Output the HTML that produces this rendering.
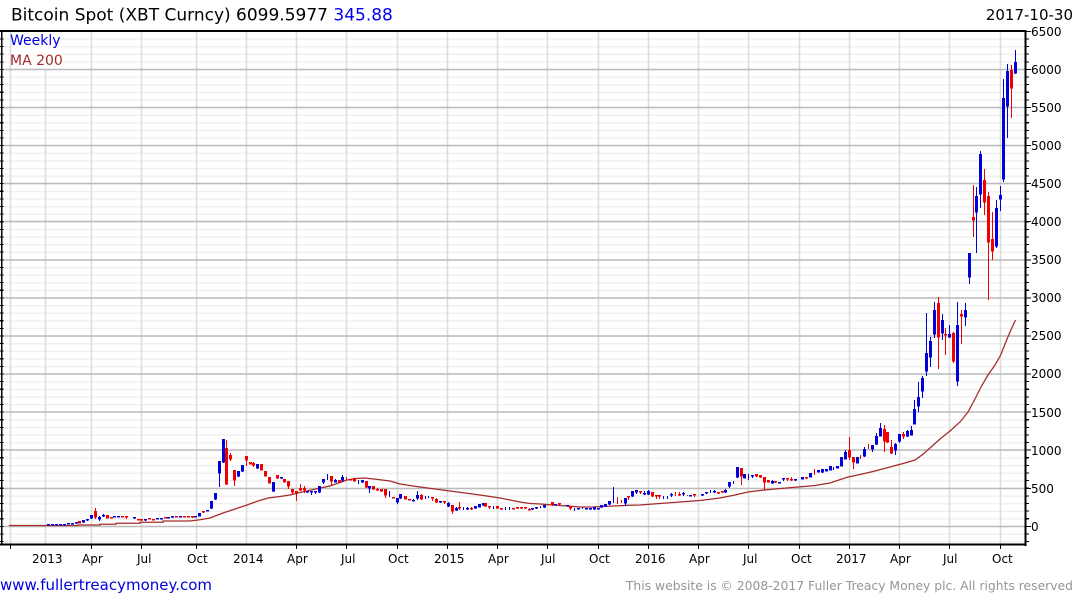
<!DOCTYPE html>
<html><head><meta charset="utf-8"><title>Bitcoin Spot</title>
<style>html,body{margin:0;padding:0;background:#fff}svg{display:block}text{font-family:"DejaVu Sans",sans-serif}a{text-decoration:none}</style></head>
<body>
<svg width="1075" height="600" viewBox="0 0 1075 600" xmlns="http://www.w3.org/2000/svg">
<rect width="1075" height="600" fill="#fff"/>
<!-- grid -->
<g fill="none">
<path d="M513 30.8V545" stroke="#f0f0f0" stroke-width="1024" stroke-dasharray="1.5 6.115"/>
<rect x="10" y="32" width="50" height="36" fill="#fff" stroke="none"/>
<path d="M10.5 31V544M45.5 69V544M91.5 31V544M141.5 31V544M196.5 31V544M246.5 31V544M296.5 31V544M346.5 31V544M397.5 31V544M447.5 31V544M497.5 31V544M547.5 31V544M598.5 31V544M648.5 31V544M698.5 31V544M748.5 31V544M799.5 31V544M849.5 31V544M899.5 31V544M949.5 31V544M1000.5 31V544" stroke="#dcdcdc" stroke-width="1.5"/>
<path d="M2 69.5H1025M2 107.5H1025M2 145.5H1025M2 183.5H1025M2 221.5H1025M2 260H1025M2 298H1025M2 336H1025M2 374H1025M2 412H1025M2 450H1025M2 488.5H1025M2 526.5H1025" stroke="#bbb" stroke-width="1.4"/>
</g>
<!-- 200 MA -->
<path fill="none" stroke="#a52a2a" stroke-width="1.25" d="M9 525.5H78V525H100V524.3H116V523.3H140V522.3H163V521H190L200 519.8 210 518 223 513 235 509 247 505 258 501 268 498 280 496.5 290 495 300 492.5 307 491 320 488 330 486 340 482.5 347 480 356 478.5 365 478 378 479.5 390 481 400 484 410 485.5 420 487 435 489 450 491 465 493 480 495 490 496.5 500 498 510 500 520 502 530 503.5 540 504 560 505.5 580 507 593 507 603 506.5 613 506 630 505.3 640 505 660 503.5 680 502 700 500.5 720 498 735 495 748 492 760 490.5 775 489 798 487 815 485.5 830 483 848 477 860 474.5 875 471 890 467 905 463 915 460 922 455 930 448 940 439 950 431 960 422 968 412 975 399 981 387 988 375 995 365 1000.7 355 1005 344 1010 332 1015.5 320"/>
<!-- candles -->
<defs>
<path id="bb" d="M1015.5 62V73M1007.5 71V106M1003.5 98V179M1000.5 195V199M996.5 208V246M980.5 154V194M976.5 196V212M969.5 253V277M965.5 310V317M957.5 325V381M949.5 334V337M942.5 320V333M934.5 310V334M930.5 341V357M926.5 353V371M922.5 378V391M918.5 397V406M914.5 409V424M911.5 430V435M907.5 431V436M899.5 434V441M895.5 444V450M880.5 428V436M876.5 436V444M872.5 445V449M864.5 449V456M857.5 457V463M845.5 452V459M841.5 457V466M837.5 466V468M830.5 466V470M826.5 469V471M822.5 469V472M818.5 470V472M810.5 473V477M802.5 477V479M795.5 479V480M783.5 478V479M779.5 482V483M772.5 481V483M752.5 475V476M744.5 474V478M737.5 467V477M729.5 482V486M725.5 490V492M714.5 491V492M706.5 492V493M702.5 494V495M690.5 495V496M683.5 493V494M671.5 494V495M648.5 491V494M644.5 493V494M636.5 490V492M632.5 491V496M625.5 498V503M609.5 501V504M605.5 504V506M601.5 505V507M598.5 508V509M594.5 507V509M590.5 508V509M586.5 508V509M578.5 508V509M567.5 505V506M555.5 504V505M544.5 505V507M536.5 507V508M532.5 508V509M483.5 503V505M479.5 504V507M475.5 506V508M467.5 508V509M456.5 508V510M448.5 503V506M440.5 501V502M417.5 495V498M413.5 500V501M400.5 494V498M397.5 498V502M369.5 486V488M362.5 480V482M342.5 477V480M335.5 480V482M323.5 479V482M319.5 486V492M315.5 491V492M311.5 491V492M307.5 491V492M281.5 477V478M273.5 482V491M257.5 464V468M242.5 465V471M238.5 471V476M223.5 439V462M219.5 461V473M215.5 493V499M211.5 501V508M207.5 510V511M199.5 513V516M195.5 516V517M180.5 516V517M172.5 516V517M168.5 517V518M161.5 518V519M157.5 518V519M145.5 519V520M134.5 517V518M118.5 516V517M114.5 516V517M103.5 515V516M99.5 517V519M91.5 515V518M87.5 519V520M83.5 520V522M76.5 522V523M72.5 523V524M68.5 523V524M64.5 524V525M60.5 524V525M56.5 524V525M52.5 524V525M48.5 524V525"/>
<path id="rb" d="M1011.5 70V88M992.5 239V251M988.5 196V242M984.5 180V202M973.5 217V220M961.5 314V316M953.5 333V361M945.5 334V335M938.5 303V337M903.5 434V436M891.5 447V453M887.5 432V442M884.5 429V441M853.5 457V462M849.5 450V457M806.5 477V478M791.5 479V480M787.5 478V479M775.5 481V482M764.5 477V482M768.5 480V482M760.5 475V477M756.5 474V476M741.5 468V476M722.5 491V492M718.5 492V493M694.5 494V495M679.5 494V495M659.5 495V496M656.5 495V496M652.5 492V496M640.5 491V492M628.5 496V497M570.5 506V508M559.5 503V504M552.5 502V505M529.5 509V510M525.5 507V508M521.5 507V508M517.5 507V508M513.5 508V509M501.5 508V509M497.5 506V508M489.5 506V507M485.5 503V506M471.5 508V509M459.5 507V508M452.5 505V511M444.5 501V502M436.5 499V502M432.5 497V498M421.5 495V499M409.5 499V500M405.5 496V499M393.5 497V498M385.5 489V495M381.5 489V491M377.5 489V490M373.5 486V489M366.5 481V487M354.5 478V481M350.5 479V480M339.5 480V482M331.5 476V481M304.5 488V490M300.5 488V490M296.5 491V493M292.5 489V492M288.5 481V486M284.5 479V482M277.5 475V478M269.5 477V483M265.5 471V476M261.5 464V470M253.5 463V465M250.5 462V464M246.5 456V460M234.5 470V480M230.5 455V459M226.5 448V484M203.5 511V512M192.5 516V517M188.5 516V517M184.5 516V517M176.5 516V517M165.5 517V518M153.5 519V520M149.5 518V519M141.5 519V520M138.5 519V520M126.5 516V517M122.5 516V517M111.5 517V518M107.5 515V518M95.5 511V517M79.5 521V523"/>
</defs>
<g fill="none" shape-rendering="crispEdges">
<path stroke="#0000d8" stroke-width="1" d="M1015.5 50V74M1007.5 64V138M1003.5 79V182M1000.5 186V211M996.5 200V248M980.5 151V208M976.5 187V253M969.5 253V284M965.5 303V326M957.5 302V386M949.5 325V338M942.5 314V340M934.5 302V338M930.5 337V367M926.5 313V376M922.5 376V398M918.5 382V412M914.5 400V424M911.5 426V435M907.5 430V437M899.5 434V443M895.5 443V455M880.5 423V436M876.5 433V445M872.5 445V452M864.5 447V457M857.5 457V463M845.5 450V459M841.5 457V466M833.5 467V470M830.5 466V470M826.5 469V471M822.5 469V473M818.5 470V472M810.5 473V477M802.5 477V479M795.5 479V481M772.5 480V484M725.5 489V493M729.5 482V488M733.5 481V484M737.5 467V478M744.5 474V478M748.5 474V480M752.5 475V478M779.5 482V483M783.5 478V481M763.5 478V479M632.5 491V497M636.5 490V494M644.5 491V495M648.5 490V495M663.5 496V499M667.5 496V499M671.5 493V497M683.5 492V496M702.5 494V496M706.5 492V494M710.5 490V493M714.5 490V493M625.5 498V506M613.5 487V503M609.5 501V505M605.5 504V507M601.5 505V508M594.5 507V510M590.5 508V510M582.5 507V509M574.5 508V511M544.5 505V508M540.5 506V508M536.5 507V509M532.5 508V510M505.5 507V510M509.5 507V510M493.5 506V509M483.5 503V506M479.5 504V507M475.5 506V509M467.5 507V510M463.5 507V510M456.5 507V511M448.5 502V507M440.5 501V503M428.5 496V498M425.5 496V499M417.5 491V500M413.5 499V501M400.5 494V499M397.5 498V504M389.5 491V497M369.5 486V493M362.5 480V483M358.5 480V484M342.5 475V482M335.5 479V482M327.5 474V480M323.5 479V484M319.5 486V493M315.5 491V494M311.5 491V495M307.5 491V493M281.5 477V479M273.5 482V492M257.5 464V469M242.5 465V472M238.5 471V477M223.5 439V463M219.5 461V487M215.5 493V500M211.5 501V509M207.5 510V511M199.5 513V516M103.5 514V517M99.5 516V521M91.5 515V519M83.5 520V523M87.5 519V521M76.5 522V524M172.5 516V518M134.5 517V519M145.5 519V521"/>
<use href="#bb" stroke="#0000d8" stroke-width="3"/>
<use href="#bb" y="0.7" stroke="#0000d8" stroke-width="3"/>
<path stroke="#f00000" stroke-width="1" d="M1011.5 65V118M992.5 212V260M988.5 192V300M984.5 169V215M973.5 185V237M961.5 310V344M953.5 332V363M945.5 328V355M938.5 297V369M903.5 432V439M891.5 440V454M887.5 432V443M884.5 425V452M868.5 444V449M860.5 455V459M853.5 457V469M849.5 437V460M814.5 469V475M806.5 477V479M791.5 477V481M787.5 478V481M775.5 481V483M764.5 477V490M760.5 475V478M756.5 474V477M741.5 468V485M722.5 491V493M718.5 492V494M694.5 494V497M687.5 495V496M679.5 492V496M675.5 492V496M659.5 495V499M656.5 495V499M652.5 492V497M640.5 491V494M628.5 496V500M621.5 500V503M617.5 497V504M570.5 506V510M559.5 503V505M552.5 502V506M529.5 508V510M525.5 507V509M521.5 507V509M517.5 507V509M501.5 508V510M497.5 506V509M489.5 506V509M485.5 503V507M471.5 507V510M459.5 502V510M452.5 505V514M444.5 501V504M436.5 498V503M432.5 497V501M421.5 494V500M409.5 499V500M405.5 496V499M393.5 497V498M385.5 489V498M381.5 489V492M377.5 488V491M373.5 486V490M366.5 481V488M354.5 478V481M350.5 479V480M346.5 477V480M339.5 480V482M331.5 476V485M304.5 486V493M300.5 484V491M296.5 491V501M292.5 489V495M288.5 481V489M284.5 479V482M277.5 475V479M269.5 477V483M265.5 471V476M261.5 464V470M253.5 462V467M250.5 462V464M246.5 456V466M234.5 470V486M230.5 453V461M226.5 440V485M203.5 511V513M192.5 516V518M188.5 516V517M141.5 519V521M126.5 516V519M95.5 508V519"/>
<use href="#rb" stroke="#f00000" stroke-width="3"/>
<use href="#rb" y="0.7" stroke="#f00000" stroke-width="3"/>
</g>
<!-- frame -->
<g fill="none" stroke="#000" shape-rendering="crispEdges">
<path stroke-width="2" d="M0 31H1026M1025.5 30V546M0 544.5H1026"/>
<path stroke-width="1.5" d="M1.5 30V545"/>
<path d="M1.5 30.8V545" stroke-width="4" stroke-dasharray="1.1 6.515"/>
<path d="M1027.5 30.8V545" stroke-width="3" stroke-dasharray="1.1 6.515"/>
<path stroke-width="1.2" d="M1026 31.5H1031M1026 69.5H1031M1026 107.5H1031M1026 145.5H1031M1026 183.5H1031M1026 221.5H1031M1026 260H1031M1026 298H1031M1026 336H1031M1026 374H1031M1026 412H1031M1026 450H1031M1026 488.5H1031M1026 526.5H1031"/>
<path stroke-width="1.2" d="M10.5 545V549M91.5 545V549M141.5 545V549M196.5 545V549M296.5 545V549M346.5 545V549M397.5 545V549M447.5 545V549M497.5 545V549M547.5 545V549M598.5 545V549M648.5 545V549M698.5 545V549M748.5 545V549M799.5 545V549M849.5 545V549M899.5 545V549M949.5 545V549M1000.5 545V549"/>
</g>
<!-- text -->
<text x="11" y="20.5" font-size="17" fill="#000">Bitcoin Spot (XBT Curncy) 6099.5977 <tspan fill="#0000f0">345.88</tspan></text>
<text x="1073" y="20" font-size="15" fill="#000" text-anchor="end">2017-10-30</text>
<text x="10" y="45" font-size="14" fill="#0000e0">Weekly</text>
<text x="10" y="65" font-size="14" fill="#a52a2a">MA 200</text>
<g font-size="12" fill="#000">
<text x="1031" y="36">6500</text><text x="1031" y="74">6000</text><text x="1031" y="112">5500</text><text x="1031" y="150">5000</text><text x="1031" y="188">4500</text><text x="1031" y="226">4000</text><text x="1031" y="264">3500</text><text x="1031" y="302">3000</text><text x="1031" y="340">2500</text><text x="1031" y="378">2000</text><text x="1031" y="417">1500</text><text x="1031" y="455">1000</text><text x="1031" y="493">500</text><text x="1031" y="531">0</text>
<text x="32" y="563">2013</text><text x="82" y="563">Apr</text><text x="137" y="563">Jul</text><text x="187" y="563">Oct</text><text x="233" y="563">2014</text><text x="287" y="563">Apr</text><text x="341" y="563">Jul</text><text x="388" y="563">Oct</text><text x="434" y="563">2015</text><text x="488" y="563">Apr</text><text x="541" y="563">Jul</text><text x="589" y="563">Oct</text><text x="635" y="563">2016</text><text x="689" y="563">Apr</text><text x="743" y="563">Jul</text><text x="791" y="563">Oct</text><text x="836" y="563">2017</text><text x="890" y="563">Apr</text><text x="943" y="563">Jul</text><text x="992" y="563">Oct</text>
</g>
<text x="0" y="590" font-size="15" fill="#0000e0">www.fullertreacymoney.com</text>
<text x="1073" y="590" font-size="12.35" fill="#969696" text-anchor="end">This website is © 2008-2017 Fuller Treacy Money plc. All rights reserved</text>
</svg>
</body></html>
